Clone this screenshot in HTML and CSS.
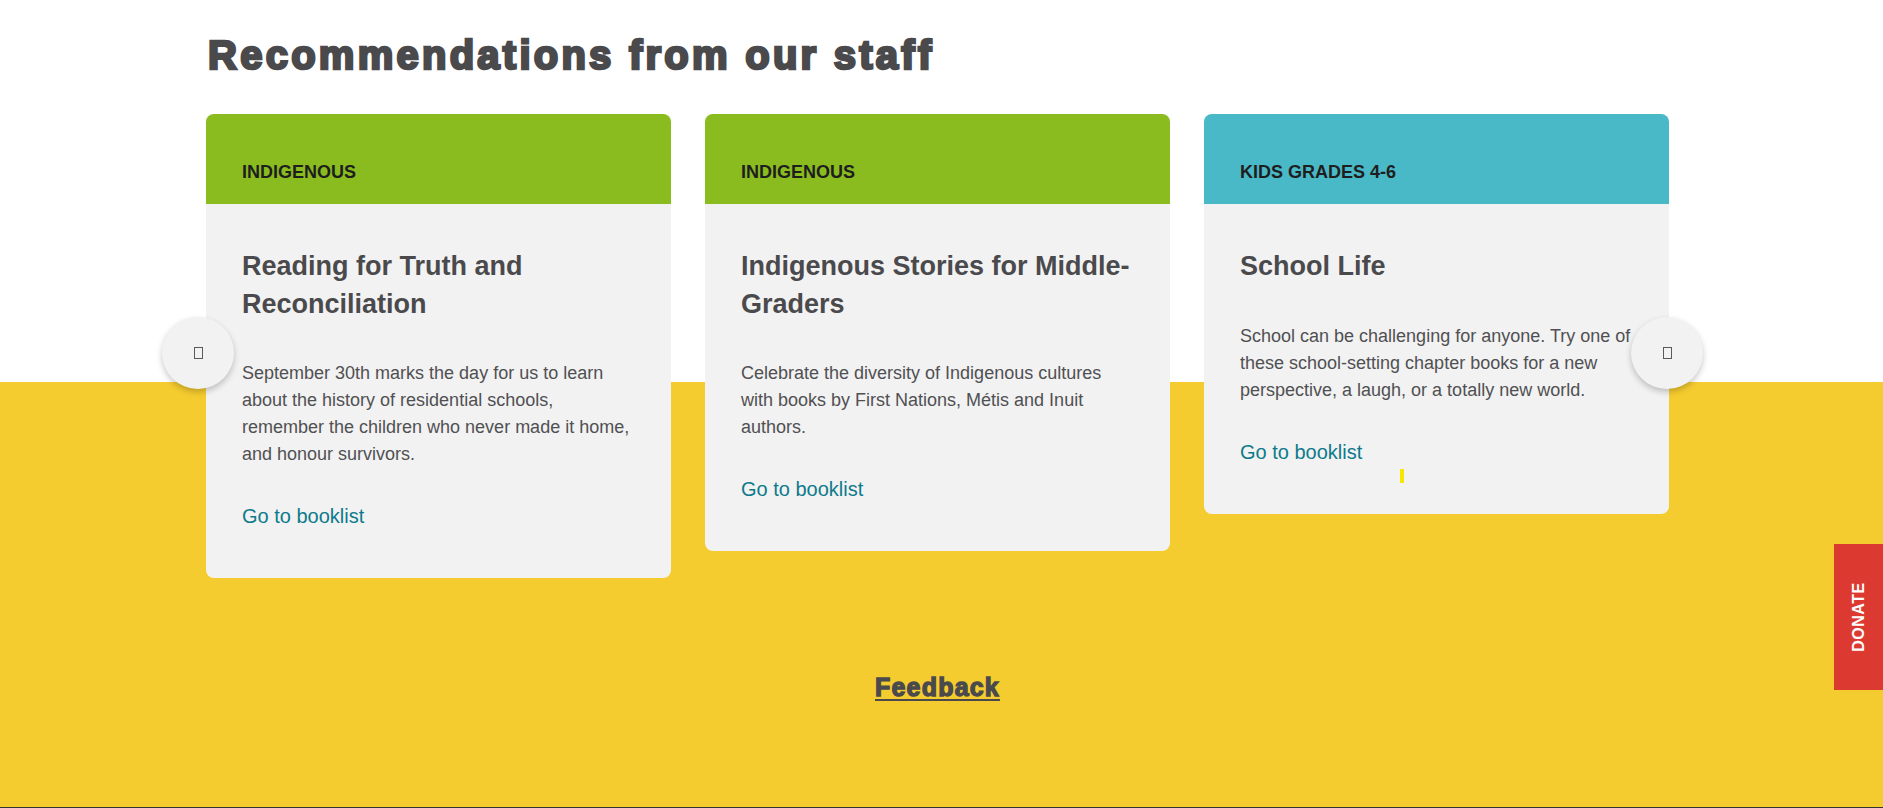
FILE: index.html
```html
<!DOCTYPE html>
<html lang="en">
<head>
<meta charset="utf-8">
<title>Recommendations from our staff</title>
<link rel="stylesheet" href="styles.css">
</head>
<body>
<div class="page">
  <section class="staff">
    <div class="container">
      <h2 class="staff-title">Recommendations from our staff</h2>
      <div class="carousel">
        <button class="nav-btn nav-prev" aria-label="Previous"><span class="tofu"></span></button>
        <div class="cards">
          <article class="card">
            <div class="card-head green"><span class="card-label">INDIGENOUS</span></div>
            <div class="card-body">
              <h3 class="card-title">Reading for Truth and Reconciliation</h3>
              <p class="card-text">September 30th marks the day for us to learn about the history of residential schools, remember the children who never made it home, and honour survivors.</p>
              <a class="card-link" href="#">Go to booklist</a>
            </div>
          </article>
          <article class="card">
            <div class="card-head green"><span class="card-label">INDIGENOUS</span></div>
            <div class="card-body">
              <h3 class="card-title">Indigenous Stories for Middle-Graders</h3>
              <p class="card-text">Celebrate the diversity of Indigenous cultures with books by First Nations, Métis and Inuit authors.</p>
              <a class="card-link" href="#">Go to booklist</a>
            </div>
          </article>
          <article class="card card-marked">
            <div class="card-head teal"><span class="card-label">KIDS GRADES 4-6</span></div>
            <div class="card-body">
              <h3 class="card-title">School Life</h3>
              <p class="card-text">School can be challenging for anyone. Try one of these school-setting chapter books for a new perspective, a laugh, or a totally new world.</p>
              <a class="card-link" href="#">Go to booklist</a>
            </div>
            <span class="cursor-mark"></span>
          </article>
        </div>
        <button class="nav-btn nav-next" aria-label="Next"><span class="tofu"></span></button>
      </div>
    </div>
  </section>
  <section class="feedback">
    <div class="container feedback-inner">
      <a class="feedback-link" href="#">Feedback</a>
    </div>
  </section>
</div>
<footer class="footer"></footer>
<a class="donate" href="#"><span>DONATE</span></a>
</body>
</html>
```
FILE: styles.css
```css
* { box-sizing: border-box; }

html, body {
  margin: 0;
  padding: 0;
}

body {
  font-family: "Liberation Sans", Arial, sans-serif;
  color: #4b4b4d;
  background: #333;
  overflow: hidden;
}

.page {
  height: 807px;
  background: linear-gradient(to bottom, #ffffff 0, #ffffff 382px, #f5cc2f 382px);
}

.staff {
  padding-top: 28px;
}

.container {
  width: 1463px;
  margin-left: 206px;
}

.staff-title {
  margin: 0 0 31px 0;
  padding-left: 2px;
  font-size: 40px;
  line-height: 55px;
  font-weight: 700;
  color: #4a4a4d;
  letter-spacing: 3.25px;
  -webkit-text-stroke: 2.6px #4a4a4d;
}

.carousel {
  position: relative;
}

.cards {
  display: flex;
  gap: 34px;
  align-items: flex-start;
}

.card {
  position: relative;
  flex: 0 0 465px;
  border-radius: 8px;
  overflow: hidden;
  background: #f2f2f2;
}

.card-head {
  height: 90px;
  padding: 48px 36px 21px;
}

.card-head.green { background: #8abc20; }
.card-head.teal { background: #49b8c7; }

.card-label {
  display: block;
  font-size: 18px;
  line-height: 21px;
  font-weight: 700;
  color: #1e1e1e;
}

.card-body {
  padding: 44px 36px 47px;
}

.card-title {
  margin: 0;
  font-size: 27px;
  line-height: 37.5px;
  font-weight: 700;
  color: #4a4a4d;
}

.card-text {
  margin: 37px 0 0 0;
  font-size: 18px;
  line-height: 27px;
  color: #505052;
}

.card-link {
  display: block;
  margin-top: 33px;
  font-size: 20px;
  line-height: 30px;
  color: #0d7a8c;
  text-decoration: none;
}

.cursor-mark {
  position: absolute;
  left: 196px;
  top: 355px;
  width: 4px;
  height: 14px;
  background: #f7e600;
}

.nav-btn {
  position: absolute;
  top: 203px;
  width: 72px;
  height: 72px;
  border: 0;
  border-radius: 50%;
  background: #f2f2f2;
  box-shadow: 0 3px 6px rgba(0, 0, 0, 0.22);
  display: flex;
  align-items: center;
  justify-content: center;
  padding: 0;
  z-index: 2;
  cursor: pointer;
}

.nav-prev { left: -44px; }
.nav-next { right: -34px; }

.tofu {
  display: block;
  width: 9px;
  height: 12px;
  border: 1px solid #5a5a5a;
}

.feedback {
  padding-top: 94px;
}

.feedback-inner {
  text-align: center;
}

.feedback-link {
  font-size: 25px;
  line-height: 30px;
  font-weight: 700;
  color: #4a4a4d;
  letter-spacing: 1.2px;
  -webkit-text-stroke: 1.3px #4a4a4d;
  text-decoration: underline;
  text-decoration-thickness: 2px;
  text-underline-offset: 3px;
}

.footer {
  height: 1px;
  background: #333;
}

.donate {
  position: fixed;
  right: 0;
  top: 544px;
  width: 49px;
  height: 146px;
  background: #dc3a31;
  display: flex;
  align-items: center;
  justify-content: center;
  text-decoration: none;
}

.donate span {
  display: block;
  transform: rotate(-90deg);
  color: #ffffff;
  font-size: 16px;
  font-weight: 700;
  letter-spacing: 0.5px;
  white-space: nowrap;
}
```
